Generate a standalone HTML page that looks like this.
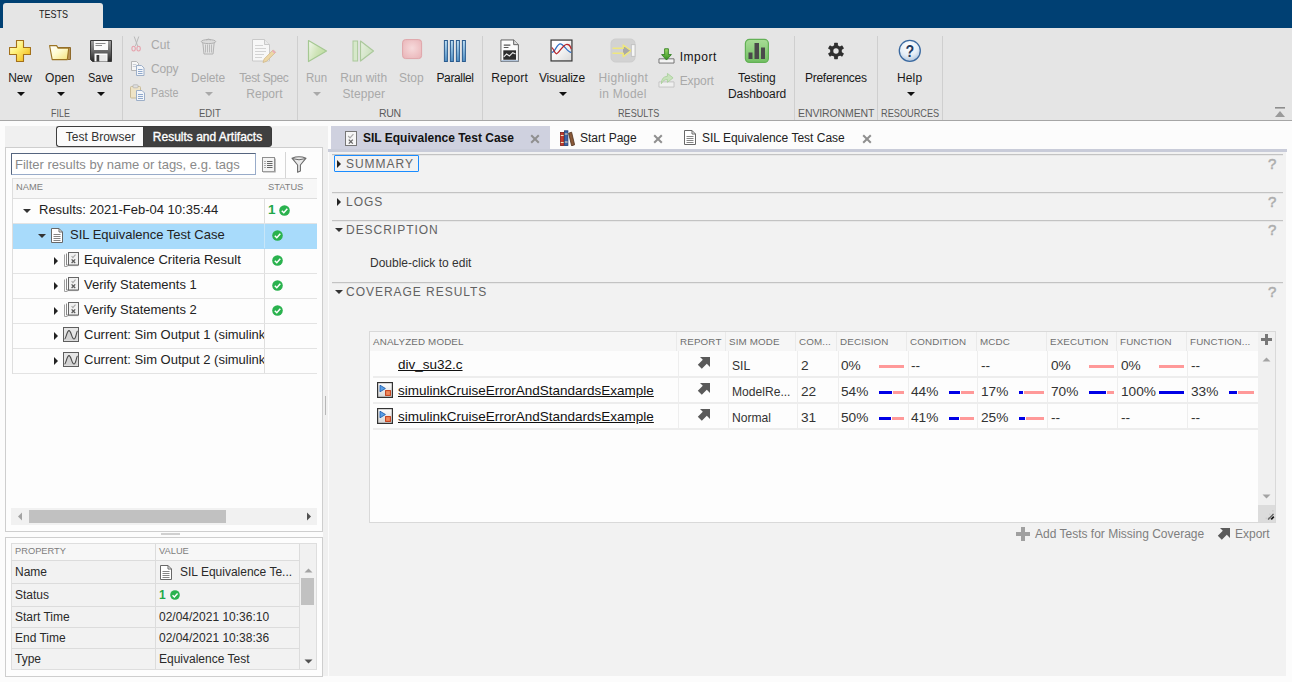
<!DOCTYPE html>
<html><head>
<meta charset="utf-8">
<title>Test Manager</title>
<style>
*{box-sizing:border-box;margin:0;padding:0}
html,body{width:1292px;height:682px;overflow:hidden;background:#fcfcfc;font-family:"Liberation Sans",sans-serif;font-size:12px;color:#000}
.abs{position:absolute}
#app{position:relative;width:1292px;height:682px;overflow:hidden;background:#fcfcfc}
/* title bar */
#titlebar{left:0;top:0;width:1292px;height:28px;background:#004073}
#tabtests{left:3px;top:3px;width:100px;height:26px;background:#e5e5e5;border-radius:3px 3px 0 0;text-align:center;font-size:12px;line-height:23px;color:#111}
/* toolstrip */
#toolstrip{left:0;top:28px;width:1292px;height:93px;background:#e5e5e5;border-bottom:1px solid #a6a6a6}
.tsep{position:absolute;top:8px;width:1px;height:84px;background:#cfcfcf}
.tl{position:absolute;font-size:12px;line-height:16px;text-align:center;white-space:nowrap;color:#1a1a1a;transform:translateX(-50%)}
.tl.dis{color:#a9a9a9}
.tsl{position:absolute;font-size:12px;line-height:16px;white-space:nowrap;color:#111}
.tsl.dis{color:#a9a9a9}
.tg{position:absolute;top:78px;font-size:10.5px;line-height:14px;color:#5c5c5c;transform:translateX(-50%);white-space:nowrap}
.arr{position:absolute;width:0;height:0;border-left:4px solid transparent;border-right:4px solid transparent;border-top:4px solid #111;transform:translateX(-50%)}
.arr.dis{border-top-color:#a9a9a9}
.ico{position:absolute}
</style>
</head>
<body>
<div id="app">
<!-- TITLEBAR -->
<div id="titlebar" class="abs"></div>
<div id="tabtests" class="abs"><span style="position:absolute;top:0;left:35.6px;font-size:11px;line-height:22px;white-space:nowrap;transform:scaleX(0.82);transform-origin:0 0;color:#1a1a1a">TESTS</span></div>
<!-- TOOLSTRIP -->
<div id="toolstrip" class="abs">
<svg width="0" height="0" style="position:absolute"><defs>
<linearGradient id="gGold" x1="0" y1="0" x2="1" y2="1"><stop offset="0" stop-color="#fffde8"></stop><stop offset="0.4" stop-color="#fff27a"></stop><stop offset="1" stop-color="#f0ae08"></stop></linearGradient>
<linearGradient id="gFold" x1="0" y1="0" x2="1" y2="1"><stop offset="0" stop-color="#ffffff"></stop><stop offset="0.45" stop-color="#fffbd0"></stop><stop offset="1" stop-color="#f4e07a"></stop></linearGradient>
<linearGradient id="gSave" x1="0" y1="0" x2="0" y2="1"><stop offset="0" stop-color="#a0a0a0"></stop><stop offset="0.5" stop-color="#6a6a6a"></stop><stop offset="1" stop-color="#262626"></stop></linearGradient>
<linearGradient id="gGreen" x1="0" y1="0.1" x2="1" y2="0.6"><stop offset="0" stop-color="#f0f6ea"></stop><stop offset="0.55" stop-color="#cfe4b8"></stop><stop offset="1" stop-color="#bcdc9e"></stop></linearGradient>
<linearGradient id="gGreen2" x1="0" y1="0.1" x2="1" y2="0.6"><stop offset="0" stop-color="#e6efdf"></stop><stop offset="1" stop-color="#c8dfba"></stop></linearGradient>
<linearGradient id="gBlue" x1="0" y1="0" x2="1" y2="0"><stop offset="0" stop-color="#4d88c4"></stop><stop offset="0.5" stop-color="#9cc3e6"></stop><stop offset="1" stop-color="#4d88c4"></stop></linearGradient>
<linearGradient id="gBlueV" x1="0" y1="0" x2="0" y2="1"><stop offset="0" stop-color="#bfe0f5"></stop><stop offset="1" stop-color="#4f8fc4"></stop></linearGradient>
<radialGradient id="gStop" cx="0.5" cy="0.45" r="0.7"><stop offset="0" stop-color="#f6dadb"></stop><stop offset="1" stop-color="#e9b3b7"></stop></radialGradient>
<linearGradient id="gDash" x1="0" y1="0" x2="0" y2="1"><stop offset="0" stop-color="#a8dc96"></stop><stop offset="1" stop-color="#72c062"></stop></linearGradient>
<radialGradient id="gHelp" cx="0.45" cy="0.3" r="0.8"><stop offset="0" stop-color="#ffffff"></stop><stop offset="0.55" stop-color="#e4edf6"></stop><stop offset="1" stop-color="#9db6d2"></stop></radialGradient>
<linearGradient id="gMdl" x1="0" y1="0" x2="0" y2="1"><stop offset="0" stop-color="#ffffff"></stop><stop offset="1" stop-color="#d6d6d6"></stop></linearGradient>
<linearGradient id="gImp" x1="0" y1="0" x2="0" y2="1"><stop offset="0" stop-color="#9fdc6a"></stop><stop offset="1" stop-color="#2f8f1d"></stop></linearGradient>
</defs></svg>
<!-- FILE -->
<svg class="ico" style="left:9px;top:12px" width="22" height="22" viewBox="0 0 22 22"><path d="M7.5 0.5h7v7h7v7h-7v7h-7v-7h-7v-7h7z" fill="url(#gGold)" stroke="#a3701a" stroke-width="1.1" stroke-linejoin="round"></path></svg>
<div class="tl" style="left: 8.22px; top: 42px; transform: none; letter-spacing: -0.128px; text-align: left;">New</div><div class="arr" style="left:21px;top:64px"></div>
<svg class="ico" style="left:49px;top:17px" width="23" height="17" viewBox="0 0 23 17"><path d="M8 2.5h13.5v12h-2.5z" fill="#b8925a" stroke="#8f6a2c" stroke-width="1"></path><path d="M0.6 0.6h7l1.5 2.5h10.6l-1.4 11.5H3.2z" fill="url(#gFold)" stroke="#9c7424" stroke-width="1.1" stroke-linejoin="round"></path></svg>
<div class="tl" style="left: 45.02px; top: 42px; transform: none; letter-spacing: 0.034px; text-align: left;">Open</div><div class="arr" style="left:61px;top:64px"></div>
<svg class="ico" style="left:90px;top:12px" width="22" height="22" viewBox="0 0 22 22"><path d="M0.5 0.5h21v21H2.5l-2-2z" fill="url(#gSave)" stroke="#3a3a3a" stroke-width="1"></path><rect x="4" y="1" width="14" height="9" fill="#fafafa"></rect><rect x="5.5" y="3" width="10" height="1" fill="#8a8a8a"></rect><rect x="5.5" y="5" width="6.5" height="1" fill="#8a8a8a"></rect><rect x="4.5" y="13.5" width="13" height="8" fill="#fdfdfd"></rect><rect x="6.5" y="15" width="3" height="6.5" fill="#3a3a3a"></rect><rect x="9.5" y="15" width="7" height="6" fill="#e8e8e8"></rect></svg>
<div class="tl" style="left: 87.52px; top: 42px; transform: scaleX(0.9123); letter-spacing: 0px; transform-origin: 0px 0px; text-align: left;">Save</div><div class="arr" style="left:100.5px;top:64px"></div>
<div class="tg" style="left: 51.48px; transform: scaleX(0.8536); letter-spacing: 0px; transform-origin: 0px 0px; text-align: left;">FILE</div>
<div class="tsep" style="left:122px"></div>
<!-- EDIT -->
<svg class="ico" style="left:131px;top:8px" width="11" height="16" viewBox="0 0 11 16"><path d="M3.2 0.5L6.6 10M7.8 0.5L4.4 10" stroke="#b9b9b9" stroke-width="1" fill="none"></path><ellipse cx="2.6" cy="12.6" rx="1.7" ry="2.4" fill="none" stroke="#e6a3ad" stroke-width="1.1"></ellipse><ellipse cx="7.6" cy="12.6" rx="1.7" ry="2.4" fill="none" stroke="#e6a3ad" stroke-width="1.1"></ellipse></svg>
<div class="tsl dis" style="left: 151.02px; top: 9px; transform: none; letter-spacing: 0.036px; text-align: left;">Cut</div>
<svg class="ico" style="left:131px;top:33px" width="14" height="15" viewBox="0 0 14 15"><path d="M0.5 0.5h5l2 2v7h-7z" fill="#f6f6f6" stroke="#b5b5b5"></path><path d="M1.8 3.5h3.5M1.8 5.5h3.5" stroke="#c9ced6" stroke-width="1"></path><path d="M5.5 4.5h5l2.5 2.5v7.5h-7.5z" fill="#f4f6f9" stroke="#9dafc8"></path><path d="M7 8.5h4.5M7 10.5h4.5M7 12.5h4.5" stroke="#8fa8cc" stroke-width="1"></path></svg>
<div class="tsl dis" style="left: 151.02px; top: 33px; transform: none; letter-spacing: -0.185px; text-align: left;">Copy</div>
<svg class="ico" style="left:130px;top:56px" width="15" height="17" viewBox="0 0 15 17"><rect x="0.5" y="2.5" width="10" height="11.5" rx="1" fill="#eee3c6" stroke="#c9bb97"></rect><rect x="3" y="0.8" width="5" height="3" rx="0.8" fill="#e0e0e0" stroke="#b5b5b5" stroke-width="0.8"></rect><path d="M6.5 6.5h5.5l2.5 2.5v7.5h-8z" fill="#f4f6f9" stroke="#9dafc8"></path><path d="M8 10.5h5M8 12.5h5M8 14.5h5" stroke="#8fa8cc" stroke-width="1"></path></svg>
<div class="tsl dis" style="left: 151.02px; top: 57px; transform: scaleX(0.8948); letter-spacing: 0px; transform-origin: 0px 0px; text-align: left;">Paste</div>
<svg class="ico" style="left:200px;top:10px" width="17" height="17" viewBox="0 0 17 17"><path d="M2.8 4.5h11.4l-1.2 11.5H4z" fill="#e4e4e4" stroke="#b2b2b2"></path><path d="M5.5 6.5v8M7.5 6.5v8M9.5 6.5v8M11.5 6.5v8" stroke="#b4b4b4" stroke-width="0.9"></path><ellipse cx="8.5" cy="3.6" rx="7.2" ry="2" fill="#dcdcdc" stroke="#b0b0b0"></ellipse><path d="M6 1.9q2.5-1.6 5 0" fill="none" stroke="#b0b0b0"></path></svg>
<div class="tl dis" style="left: 191.12px; top: 42px; transform: none; letter-spacing: -0.105px; text-align: left;">Delete</div><div class="arr dis" style="left:209px;top:64px"></div>
<svg class="ico" style="left:251px;top:10px" width="26" height="26" viewBox="0 0 26 26"><path d="M1.5 1.5h12l5 5v16.5h-17z" fill="#f7f7f7" stroke="#c9c9c9"></path><path d="M13.5 1.5v5h5" fill="#eaeaea" stroke="#c9c9c9"></path><path d="M4 7.5h8M4 10.5h11M4 13.5h11M4 16.5h9M4 19.5h7" stroke="#d3d3d3" stroke-width="1"></path><path d="M12 24.5l1.2-3.6 9-9 2.4 2.4-9 9z" fill="#edd7a6" stroke="#d2b98a" stroke-width="0.8"></path><path d="M21 13.1l1.2-1.2 2.4 2.4-1.2 1.2z" fill="#e9a8bd"></path></svg>
<div class="tl dis" style="left: 239.22px; top: 42px; transform: none; letter-spacing: -0.38px; text-align: left;">Test Spec</div><div class="tl dis" style="left: 246.22px; top: 58px; transform: none; letter-spacing: 0.046px; text-align: left;">Report</div>
<div class="tg" style="left: 199.28px; transform: scaleX(0.9088); letter-spacing: 0px; transform-origin: 0px 0px; text-align: left;">EDIT</div>
<div class="tsep" style="left:297px"></div>
<!-- RUN -->
<svg class="ico" style="left:307px;top:11px" width="22" height="24" viewBox="0 0 22 24"><path d="M1.5 1.5L19.5 12 1.5 22.5z" fill="url(#gGreen)" stroke="#a5c892" stroke-width="1.2" stroke-linejoin="round"></path></svg>
<div class="tl dis" style="left: 306.02px; top: 42px; transform: scaleX(0.9566); letter-spacing: 0px; transform-origin: 0px 0px; text-align: left;">Run</div><div class="arr dis" style="left:317px;top:64px"></div>
<svg class="ico" style="left:352px;top:11px" width="23" height="24" viewBox="0 0 23 24"><rect x="1" y="2" width="4.6" height="20" fill="#d6e8ca" stroke="#abc99c"></rect><path d="M8.5 2L21.5 12 8.5 22z" fill="url(#gGreen2)" stroke="#abc99c" stroke-width="1.2" stroke-linejoin="round"></path></svg>
<div class="tl dis" style="left: 340.22px; top: 42px; transform: none; letter-spacing: 0.025px; text-align: left;">Run with</div><div class="tl dis" style="left: 342.52px; top: 58px; transform: none; letter-spacing: 0.071px; text-align: left;">Stepper</div>
<svg class="ico" style="left:401px;top:10px" width="22" height="22" viewBox="0 0 22 22"><rect x="1.6" y="1.6" width="19" height="19" rx="3" fill="url(#gStop)" stroke="#dfa5a9"></rect></svg>
<div class="tl dis" style="left: 399.12px; top: 42px; transform: none; letter-spacing: -0.043px; text-align: left;">Stop</div>
<svg class="ico" style="left:443px;top:12px" width="24" height="22" viewBox="0 0 24 22"><g fill="url(#gBlueV)" stroke="#2c5c8f" stroke-width="1"><rect x="1.4" y="0.5" width="3" height="21"></rect><rect x="7.4" y="0.5" width="3" height="21"></rect><rect x="13.4" y="0.5" width="3" height="21"></rect><rect x="19.4" y="0.5" width="3" height="21"></rect></g></svg>
<div class="tl" style="left: 436.42px; top: 42px; transform: none; letter-spacing: -0.353px; text-align: left;">Parallel</div>
<div class="tg" style="left: 378.88px; transform: none; letter-spacing: -0.255px; text-align: left;">RUN</div>
<div class="tsep" style="left:482px"></div>
<!-- RESULTS -->
<svg class="ico" style="left:499.6px;top:10.6px" width="19.8" height="23.6" viewBox="0 0 21 25"><path d="M1 1h13.5l5 5v18H1z" fill="#fbfbfb" stroke="#5a5a5a"></path><path d="M14.5 1v5h5" fill="#dcdcdc" stroke="#5a5a5a"></path><path d="M4 6.5h7M4 9h5" stroke="#555" stroke-width="1.2"></path><rect x="3.5" y="12" width="13.5" height="10" fill="#2d2d2d"></rect><path d="M4 19l3-3 3 2 3.5-3.5 3 1.5" fill="none" stroke="#e8e8e8" stroke-width="1.2"></path><path d="M1.5 22.5h18v1.2h-18z" fill="#9fb6d2"></path></svg>
<div class="tl" style="left: 491.22px; top: 42px; transform: none; letter-spacing: 0.106px; text-align: left;">Report</div>
<svg class="ico" style="left:549.5px;top:10.5px" width="23" height="23" viewBox="0 0 24 24"><defs><linearGradient id="gVis" x1="0.3" y1="0.3" x2="1" y2="1"><stop offset="0" stop-color="#ffffff"></stop><stop offset="1" stop-color="#d9d9d9"></stop></linearGradient></defs><rect x="1.1" y="1.1" width="21.8" height="21.8" fill="url(#gVis)" stroke="#3c3c3c" stroke-width="1.3"></rect><path d="M1.8 14C5.5 14 7 5 10.7 5S18 14 22.2 14" fill="none" stroke="#2f6fc4" stroke-width="1.3"></path><path d="M1.8 9C3.4 9 4.6 15.4 6.8 15.4S13.4 5.6 17.6 5.6S21 8.5 22.2 10.5" fill="none" stroke="#b5262b" stroke-width="1.3"></path></svg>
<div class="tl" style="left: 538.92px; top: 42px; transform: none; letter-spacing: -0.207px; text-align: left;">Visualize</div><div class="arr" style="left:562.5px;top:64px"></div>
<svg class="ico" style="left:610px;top:10px" width="26" height="25" viewBox="0 0 26 25"><rect x="1" y="1" width="24" height="23" rx="4.5" fill="#d2d2d2" stroke="#cdcdcd"></rect><path d="M13 7.2L21 12.6 13 18.6z" fill="#a9a9a9"></path><path d="M2.5 10.2h10.7V7l8 5.6-8 6v-3.4H2.5" fill="none" stroke="#efe77e" stroke-width="1.5" stroke-linejoin="round"></path><rect x="21.3" y="6.7" width="3.7" height="11.6" fill="#f6f6f6" stroke="#bcbcbc" stroke-width="0.8"></rect></svg>
<div class="tl dis" style="left: 598.52px; top: 42px; transform: none; letter-spacing: 0.332px; text-align: left;">Highlight</div><div class="tl dis" style="left: 599.22px; top: 58px; transform: none; letter-spacing: 0.272px; text-align: left;">in Model</div>
<svg class="ico" style="left:657.5px;top:19.5px" width="17" height="16" viewBox="0 0 18 17"><path d="M1 11.5h16v4.5H1z" fill="#f4f4f4" stroke="#6d6d6d"></path><path d="M7 0.8h4v6.2h3.2L9 12.8 3.8 7H7z" fill="url(#gImp)" stroke="#2b7a1b" stroke-width="0.9" stroke-linejoin="round"></path></svg>
<div class="tsl" style="left: 679.72px; top: 21px; transform: none; letter-spacing: 0.529px; text-align: left;">Import</div>
<svg class="ico" style="left:657.5px;top:43.5px" width="17" height="16" viewBox="0 0 18 17"><path d="M1 10.5h16v5.5H1z" fill="#efefef" stroke="#c2c2c2"></path><path d="M3.5 12.5Q3.5 5 10 4.5V1.5L16 6.2 10 11V8Q5.5 8 3.5 12.5z" fill="#c8e2bc" stroke="#a9cf9a" stroke-width="0.9" stroke-linejoin="round"></path></svg>
<div class="tsl dis" style="left: 679.72px; top: 45px; transform: none; letter-spacing: -0.106px; text-align: left;">Export</div>
<svg class="ico" style="left:744px;top:10px" width="26" height="26" viewBox="0 0 26 26"><rect x="1.4" y="1.4" width="23" height="23" rx="4" fill="url(#gDash)" stroke="#63b156" stroke-width="1.2"></rect><rect x="4.5" y="14.5" width="4" height="6.5" fill="#4a4a4a"></rect><rect x="10.5" y="5" width="4.5" height="16" fill="#4a4a4a"></rect><rect x="17" y="9.5" width="4" height="11.5" fill="#4a4a4a"></rect></svg>
<div class="tl" style="left: 738.02px; top: 42px; transform: none; letter-spacing: -0.045px; text-align: left;">Testing</div><div class="tl" style="left: 728.02px; top: 58px; transform: none; letter-spacing: -0.057px; text-align: left;">Dashboard</div>
<div class="tg" style="left: 618.08px; transform: scaleX(0.8675); letter-spacing: 0px; transform-origin: 0px 0px; text-align: left;">RESULTS</div>
<div class="tsep" style="left:794px"></div>
<!-- ENV -->
<svg class="ico" style="left:827px;top:14px" width="18" height="18" viewBox="-9 -9 18 18"><g fill="#2f2f2f"><circle r="5.9"></circle><g id="tooth"><rect x="-1.9" y="-8.2" width="3.8" height="4" rx="0.6"></rect></g><use href="#tooth" transform="rotate(60)"></use><use href="#tooth" transform="rotate(120)"></use><use href="#tooth" transform="rotate(180)"></use><use href="#tooth" transform="rotate(240)"></use><use href="#tooth" transform="rotate(300)"></use></g><circle r="2.7" fill="#e5e5e5"></circle></svg>
<div class="tl" style="left: 805.02px; top: 42px; transform: none; letter-spacing: -0.274px; text-align: left;">Preferences</div>
<div class="tg" style="left: 798.08px; transform: none; letter-spacing: -0.125px; text-align: left;">ENVIRONMENT</div>
<div class="tsep" style="left:877px"></div>
<!-- RESOURCES -->
<svg class="ico" style="left:898px;top:11px" width="24" height="24" viewBox="0 0 24 24"><circle cx="11.8" cy="11.8" r="10.5" fill="url(#gHelp)" stroke="#3a69a0" stroke-width="1.3"></circle><text x="11.8" y="17.8" font-family="Liberation Sans" font-weight="bold" font-size="17" text-anchor="middle" fill="#1f3a5f" transform="translate(1.9 0) scale(0.84 1)">?</text></svg>
<div class="tl" style="left: 897.02px; top: 42px; transform: none; letter-spacing: 0.124px; text-align: left;">Help</div><div class="arr" style="left:910.5px;top:64px"></div>
<div class="tg" style="left: 881.18px; transform: scaleX(0.8756); letter-spacing: 0px; transform-origin: 0px 0px; text-align: left;">RESOURCES</div>
<div class="tsep" style="left:942px"></div>
<!-- collapse -->
<svg class="ico" style="left:1274px;top:78px" width="12" height="12" viewBox="0 0 12 12"><rect x="1" y="1" width="10" height="1.6" fill="#8d8d8d"></rect><path d="M1 11L6 5l5 6z" fill="#9a9a9a"></path></svg>

</div>
<style>
#lp-strip{left:5px;top:126px;width:323px;height:22px;background:#f0f0f0}
#lp-gutter{left:323px;top:126px;width:5px;height:550px;background:#f0f0f0}
#btnTB{left:56px;top:126px;width:88px;height:21px;background:#fbfbfb;border:1px solid #3f3f3f;border-right:none;border-radius:3px 0 0 3px;font-size:12px;line-height:20px;text-align:center;color:#333}
#btnRA{left:143px;top:126px;width:129px;height:21px;background:#404040;border:1px solid #3a3a3a;border-radius:0 3px 3px 0;font-size:12px;line-height:20px;text-align:center;color:#fff;-webkit-text-stroke:0.35px #fff}
#lp-top{left:5px;top:147px;width:318px;height:385px;background:#fdfdfd;border:1px solid #cecece}
#filter{left:11px;top:153px;width:245px;height:22px;background:#fff;border:1px solid;border-color:#55657f #98abc9 #98abc9 #55657f;font-size:13px;line-height:21px;color:#8a8a8a;padding-left:3px;white-space:nowrap;overflow:hidden}
#lp-vsep{left:285px;top:152px;width:1px;height:26px;background:#d5d5d5}
.th{position:absolute;font-size:9.3px;color:#7d7d7d;letter-spacing:0;line-height:12px;white-space:nowrap}
#tree{left:12px;top:178px;width:306px;height:196px;border-left:1px solid #dedede;border-right:1px solid transparent;overflow:hidden}
#tree .hd{position:absolute;left:0;top:0;width:304px;height:21px;background:#f7f7f7;border-top:1px solid #dedede;border-bottom:1px solid #dedede}
.tr{position:absolute;left:0;width:304px;height:25px;border-bottom:1px solid #e3e3e3;font-size:13px;line-height:24px;color:#222;white-space:nowrap}
.tr.sel{background:#a8dbfb;border-bottom-color:#a8dbfb}
.tr .nm{position:absolute;left:0;top:0;width:252px;height:24px;overflow:hidden;border-right:1px solid #dedede}
.tr .tx{position:absolute;top:-1px}
.colsep{position:absolute;left:251px;top:0;width:1px;height:196px;background:#dedede}
.tri-d{position:absolute;width:0;height:0;border-left:4px solid transparent;border-right:4px solid transparent;border-top:4.5px solid #333}
.tri-r{position:absolute;width:0;height:0;border-top:4px solid transparent;border-bottom:4px solid transparent;border-left:4.5px solid #222}
.chk{position:absolute;width:11px;height:11px}
.one{position:absolute;font-weight:bold;font-size:13.5px;color:#1fa84a;line-height:24px}
#hscroll{left:11px;top:508px;width:306px;height:17px;background:#f1f1f1}
#hthumb{left:29px;top:510px;width:197px;height:13px;background:#c1c1c1}
#splith{left:161px;top:533px;width:19px;height:2px;background:#d0d0d0}
#lp-bot{left:5px;top:537px;width:318px;height:140px;background:#fdfdfd;border:1px solid #cecece}
#ptab{left:11px;top:543px;width:306px;height:127px;border:1px solid #dedede;background:#f2f2f2;overflow:hidden}
.pr{position:absolute;left:0;width:287px;border-bottom:1px solid #dcdcdc;font-size:12px;color:#2a2a2a;white-space:nowrap}
.pr div{position:absolute;top:0;height:100%}
.pr .k{left:0;width:144px;border-right:1px solid #dcdcdc;padding-left:3px}
.pr .v{left:144px;width:143px;padding-left:3px}
#pscroll{position:absolute;left:287px;top:0;width:18px;height:127px;background:#f1f1f1;border-left:1px solid #dcdcdc}
</style>
<div id="lp-strip" class="abs"></div>
<div id="lp-gutter" class="abs"></div>
<div id="btnTB" class="abs">Test Browser</div>
<div id="btnRA" class="abs">Results and Artifacts</div>
<div id="lp-top" class="abs"></div>
<div id="filter" class="abs">Filter results by name or tags, e.g. tags</div>
<svg class="abs" style="left:262px;top:157px" width="14" height="16" viewBox="0 0 14 16"><rect x="0.5" y="0.5" width="12" height="14" fill="#f4f4f4" stroke="#8f8f8f"></rect><path d="M1 15.2h12.5V1.5" fill="none" stroke="#bdbdbd" stroke-width="1"></path><path d="M2.5 4.5h1M5 4.5h5.5M2.5 6.5h1M5 6.5h5.5M2.5 8.5h1M5 8.5h5.5M2.5 10.5h1M5 10.5h5.5" stroke="#666" stroke-width="1"></path></svg>
<div id="lp-vsep" class="abs"></div>
<svg class="abs" style="left:291px;top:156px" width="16" height="17" viewBox="0 0 16 17"><path d="M1 2.2Q8 -0.6 15 2.2L9.4 9v6l-2.8 1.2V9z" fill="#e9e9e9" stroke="#6a6a6a" stroke-width="1.1" stroke-linejoin="round"></path><path d="M1.5 2.6Q8 5 14.5 2.6" fill="none" stroke="#6a6a6a" stroke-width="1"></path></svg>
<div id="tree" class="abs">
  <div class="hd"></div>
  <div class="th" style="left:3px;top:3px">NAME</div>
  <div class="th" style="left:255px;top:3px">STATUS</div>
  <div class="tr" style="top:21px"><div class="nm"><i class="tri-d" style="left:10px;top:10px"></i><span class="tx" style="left:26px">Results: 2021-Feb-04 10:35:44</span></div><span class="one" style="left:255px;top:-1px">1</span><svg class="chk" style="left:266px;top:6px" viewBox="0 0 11 11"><circle cx="5.5" cy="5.5" r="5.3" fill="#2ab24e"></circle><path d="M2.8 5.7l2 2 3.5-3.9" fill="none" stroke="#fff" stroke-width="1.5"></path></svg></div>
  <div class="tr sel" style="top:46px"><div class="nm" style="border-right-color:#c8e6f8"><i class="tri-d" style="left:25px;top:10px"></i><svg style="position:absolute;left:38px;top:4px" width="12" height="15" viewBox="0 0 12 15"><path d="M0.5 0.5h7.5l3.5 3.5v10.5h-11z" fill="#fff" stroke="#686868"></path><path d="M8 0.5v3.5h3.5" fill="none" stroke="#686868"></path><path d="M2.5 6.5h7M2.5 8.5h7M2.5 10.5h7M2.5 12.5h7" stroke="#858585" stroke-width="1"></path></svg><span class="tx" style="left:57px">SIL Equivalence Test Case</span></div><svg class="chk" style="left:259px;top:6px" viewBox="0 0 11 11"><circle cx="5.5" cy="5.5" r="5.3" fill="#2ab24e"></circle><path d="M2.8 5.7l2 2 3.5-3.9" fill="none" stroke="#fff" stroke-width="1.5"></path></svg></div>
  <div class="tr" style="top:71px"><div class="nm"><i class="tri-r" style="left:41px;top:7.5px"></i><svg style="position:absolute;left:51px;top:3px" width="15" height="15" viewBox="0 0 15 15"><path d="M0.5 2.5v12h3" fill="none" stroke="#a2a2a2"></path><path d="M2.5 1.5v11.5h2.5" fill="none" stroke="#8a8a8a"></path><path d="M3.5 13.6h10.5" stroke="#9a9a9a" stroke-width="0.9"></path><rect x="4.5" y="0.5" width="10" height="12.5" fill="#f1f1f1" stroke="#666"></rect><path d="M7.6 4.2l1.3 1.4 2.6-3" fill="none" stroke="#a8a8a8" stroke-width="1.1"></path><path d="M7.6 7.4l3.6 3.6M11.2 7.4l-3.6 3.6" stroke="#5a5a5a" stroke-width="1.3"></path></svg><span class="tx" style="left:71px">Equivalence Criteria Result</span></div><svg class="chk" style="left:259px;top:6px" viewBox="0 0 11 11"><circle cx="5.5" cy="5.5" r="5.3" fill="#2ab24e"></circle><path d="M2.8 5.7l2 2 3.5-3.9" fill="none" stroke="#fff" stroke-width="1.5"></path></svg></div>
  <div class="tr" style="top:96px"><div class="nm"><i class="tri-r" style="left:41px;top:7.5px"></i><svg style="position:absolute;left:51px;top:3px" width="15" height="15" viewBox="0 0 15 15"><path d="M0.5 2.5v12h3" fill="none" stroke="#a2a2a2"></path><path d="M2.5 1.5v11.5h2.5" fill="none" stroke="#8a8a8a"></path><path d="M3.5 13.6h10.5" stroke="#9a9a9a" stroke-width="0.9"></path><rect x="4.5" y="0.5" width="10" height="12.5" fill="#f1f1f1" stroke="#666"></rect><path d="M7.6 4.2l1.3 1.4 2.6-3" fill="none" stroke="#a8a8a8" stroke-width="1.1"></path><path d="M7.6 7.4l3.6 3.6M11.2 7.4l-3.6 3.6" stroke="#5a5a5a" stroke-width="1.3"></path></svg><span class="tx" style="left:71px">Verify Statements 1</span></div><svg class="chk" style="left:259px;top:6px" viewBox="0 0 11 11"><circle cx="5.5" cy="5.5" r="5.3" fill="#2ab24e"></circle><path d="M2.8 5.7l2 2 3.5-3.9" fill="none" stroke="#fff" stroke-width="1.5"></path></svg></div>
  <div class="tr" style="top:121px"><div class="nm"><i class="tri-r" style="left:41px;top:7.5px"></i><svg style="position:absolute;left:51px;top:3px" width="15" height="15" viewBox="0 0 15 15"><path d="M0.5 2.5v12h3" fill="none" stroke="#a2a2a2"></path><path d="M2.5 1.5v11.5h2.5" fill="none" stroke="#8a8a8a"></path><path d="M3.5 13.6h10.5" stroke="#9a9a9a" stroke-width="0.9"></path><rect x="4.5" y="0.5" width="10" height="12.5" fill="#f1f1f1" stroke="#666"></rect><path d="M7.6 4.2l1.3 1.4 2.6-3" fill="none" stroke="#a8a8a8" stroke-width="1.1"></path><path d="M7.6 7.4l3.6 3.6M11.2 7.4l-3.6 3.6" stroke="#5a5a5a" stroke-width="1.3"></path></svg><span class="tx" style="left:71px">Verify Statements 2</span></div><svg class="chk" style="left:259px;top:6px" viewBox="0 0 11 11"><circle cx="5.5" cy="5.5" r="5.3" fill="#2ab24e"></circle><path d="M2.8 5.7l2 2 3.5-3.9" fill="none" stroke="#fff" stroke-width="1.5"></path></svg></div>
  <div class="tr" style="top:146px"><div class="nm"><i class="tri-r" style="left:41px;top:7.5px"></i><svg style="position:absolute;left:50px;top:3px" width="16" height="15" viewBox="0 0 16 15"><rect x="0.5" y="0.5" width="15" height="14" fill="#e6e6e6" stroke="#5e5e5e"></rect><path d="M1.5 12C3.2 12 3.8 3.6 6 3.6S8.8 12 11 12S13.2 4.5 14.6 4V13.5H1.5z" fill="#d4d4d4" stroke="none"></path><path d="M1.5 12C3.2 12 3.8 3.6 6 3.6S8.8 12 11 12S13.2 4.5 14.6 4" fill="none" stroke="#4a4a4a" stroke-width="1.1"></path></svg><span class="tx" style="left:71px">Current: Sim Output 1 (simulinkCruise</span></div></div>
  <div class="tr" style="top:171px"><div class="nm"><i class="tri-r" style="left:41px;top:7.5px"></i><svg style="position:absolute;left:50px;top:3px" width="16" height="15" viewBox="0 0 16 15"><rect x="0.5" y="0.5" width="15" height="14" fill="#e6e6e6" stroke="#5e5e5e"></rect><path d="M1.5 12C3.2 12 3.8 3.6 6 3.6S8.8 12 11 12S13.2 4.5 14.6 4V13.5H1.5z" fill="#d4d4d4" stroke="none"></path><path d="M1.5 12C3.2 12 3.8 3.6 6 3.6S8.8 12 11 12S13.2 4.5 14.6 4" fill="none" stroke="#4a4a4a" stroke-width="1.1"></path></svg><span class="tx" style="left:71px">Current: Sim Output 2 (simulinkCruise</span></div></div>
</div>
<div id="hscroll" class="abs"></div>
<div id="hthumb" class="abs"></div>
<svg class="abs" style="left:17px;top:512px" width="6" height="9" viewBox="0 0 6 9"><path d="M5 0.5L1 4.5l4 4z" fill="#a3a3a3"></path></svg>
<svg class="abs" style="left:306px;top:512px" width="6" height="9" viewBox="0 0 6 9"><path d="M1 0.5L5 4.5l-4 4z" fill="#505050"></path></svg>
<div id="splith" class="abs"></div>
<div class="abs" style="left:325px;top:396px;width:1px;height:19px;background:#b8b8b8"></div>
<div id="lp-bot" class="abs"></div>
<div id="ptab" class="abs">
  <div class="pr" style="top:0;height:17px;background:#f7f7f7"><div class="k" style="font-size:9.3px;color:#7d7d7d;line-height:15px">PROPERTY</div><div class="v" style="font-size:9.3px;color:#7d7d7d;line-height:15px">VALUE</div></div>
  <div class="pr" style="top:17px;height:23px;line-height:22px"><div class="k">Name</div><div class="v"><svg style="position:absolute;left:4px;top:4px" width="12" height="15" viewBox="0 0 12 15"><path d="M0.5 0.5h7.5l3.5 3.5v10.5h-11z" fill="#fff" stroke="#686868"></path><path d="M8 0.5v3.5h3.5" fill="none" stroke="#686868"></path><path d="M2.5 6.5h7M2.5 8.5h7M2.5 10.5h7M2.5 12.5h7" stroke="#858585" stroke-width="1"></path></svg><span style="position:absolute;left:24px">SIL Equivalence Te...</span></div></div>
  <div class="pr" style="top:40px;height:23px;line-height:22px"><div class="k">Status</div><div class="v"><span style="position:absolute;left:3px;font-weight:bold;color:#1fa84a">1</span><svg class="chk" style="left:14px;top:6px;width:10px;height:10px" viewBox="0 0 11 11"><circle cx="5.5" cy="5.5" r="5.3" fill="#2ab24e"></circle><path d="M2.8 5.7l2 2 3.5-3.9" fill="none" stroke="#fff" stroke-width="1.5"></path></svg></div></div>
  <div class="pr" style="top:63px;height:21px;line-height:20px"><div class="k">Start Time</div><div class="v">02/04/2021 10:36:10</div></div>
  <div class="pr" style="top:84px;height:21px;line-height:20px"><div class="k">End Time</div><div class="v">02/04/2021 10:38:36</div></div>
  <div class="pr" style="top:105px;height:22px;line-height:20px"><div class="k">Type</div><div class="v">Equivalence Test</div></div>
  <div id="pscroll"><svg style="position:absolute;left:4px;top:24px" width="9" height="5" viewBox="0 0 9 5"><path d="M0.5 4.5L4.5 0.5l4 4z" fill="#a3a3a3"></path></svg><div style="position:absolute;left:1px;top:34px;width:13px;height:27px;background:#c1c1c1"></div><svg style="position:absolute;left:4px;top:115px" width="9" height="5" viewBox="0 0 9 5"><path d="M0.5 0.5L4.5 4.5l4-4z" fill="#505050"></path></svg></div>
</div>

<style>
#rp-tabline{left:328px;top:149px;width:959px;height:3px;background:#c9ccd9}
#rp-body{left:329px;top:152px;width:957px;height:524px;background:#f2f2f2}
#rtab1{left:331px;top:126px;width:219px;height:23px;background:#cfd1df}
.rtt{position:absolute;font-size:12px;line-height:14px;white-space:nowrap;color:#222}
.xbtn{position:absolute;width:10px;height:10px}
.secline{position:absolute;left:332px;width:951px;height:1px;background:#c3c3c3;border-bottom:1px solid #e8e8e8;box-sizing:content-box}
.sect{position:absolute;font-size:12px;letter-spacing:0.97px;color:#626262;line-height:14px;white-space:nowrap}
.qm{position:absolute;left:1268px;font-size:15px;line-height:16px;color:#adadad;-webkit-text-stroke:0.5px #adadad}
#covbox{left:369px;top:331px;width:907px;height:192px;background:#fdfdfd;border:1px solid #d9d9d9}
#covhd{left:370px;top:332px;width:888px;height:18.5px;background:#f6f6f6}
.ch{position:absolute;top:336px;font-size:9.8px;line-height:12px;color:#6f6f6f;white-space:nowrap;letter-spacing:0.15px}
.cvh{position:absolute;top:332px;width:1px;height:19px;background:#eaeaea}
.cvs{position:absolute;top:351px;width:1.6px;height:78px;background:#eeeeee;margin-left:-0.5px}
.crl{position:absolute;left:373px;width:885px;height:2px;background:#ededed;margin-top:-1px}
.lnk{position:absolute;margin-top:1px;font-size:13.5px;line-height:16px;color:#111;text-decoration:underline;white-space:nowrap}
.cv{position:absolute;margin-top:1px;font-size:13.7px;line-height:16px;color:#333;white-space:nowrap}
.cs{position:absolute;font-size:12.1px;line-height:16px;color:#333;white-space:nowrap}
.bar{position:absolute;width:25px;height:3px;background:#f99}
.bar i{position:absolute;left:0;top:0;height:3px;background:#0000e6;border-right:1px solid #fff;box-sizing:content-box}
#covscroll{left:1258px;top:332px;width:17px;height:190px;background:#f0f0f0}
#covcorner{left:1258px;top:505px;width:17px;height:17px;background:#dcdcdc}
.act{position:absolute;top:527px;font-size:12px;line-height:14px;color:#7e7e7e;white-space:nowrap}
</style>
<div id="rp-body" class="abs"></div>
<div id="rtab1" class="abs"></div>
<div id="rp-tabline" class="abs"></div>
<!-- tab 1 -->
<svg class="abs" style="left:345px;top:131px" width="12" height="15" viewBox="0 0 12 15"><rect x="0.5" y="0.5" width="11" height="14" fill="#f6f6f6" stroke="#777"></rect><path d="M3.2 5l1.8 1.8 3.4-3.6" fill="none" stroke="#aaa" stroke-width="1.2"></path><path d="M3.8 8.6l4 4M7.8 8.6l-4 4" stroke="#666" stroke-width="1.3"></path></svg>
<div class="rtt" style="left:363px;top:131px;font-weight:bold;color:#111" id="t1">SIL Equivalence Test Case</div>
<svg class="xbtn" style="left:530px;top:134px" viewBox="0 0 10 10"><path d="M1.2 1.2l7.6 7.6M8.8 1.2L1.2 8.8" stroke="#8f8f8f" stroke-width="2"></path></svg>
<!-- tab 2 -->
<svg class="abs" style="left:560px;top:130px" width="15" height="16" viewBox="0 0 15 16"><rect x="0.5" y="2.5" width="3.4" height="13" fill="#c23b2e" stroke="#7a1f17" stroke-width="0.8"></rect><rect x="4.5" y="0.8" width="3.4" height="14.7" fill="#3b62a8" stroke="#1f3a6e" stroke-width="0.8"></rect><path d="M8.6 3.2l3-1 3 12.6-3 1z" fill="#8a5a3a" stroke="#4e2f1b" stroke-width="0.8"></path><path d="M0.8 5.5h2.8M4.8 4h2.8M4.8 12h2.8M0.8 12.5h2.8" stroke="#f4e6c0" stroke-width="1"></path></svg>
<div class="rtt" style="left:580px;top:131px" id="t2">Start Page</div>
<svg class="xbtn" style="left:653px;top:134px" viewBox="0 0 10 10"><path d="M1.2 1.2l7.6 7.6M8.8 1.2L1.2 8.8" stroke="#8f8f8f" stroke-width="2"></path></svg>
<!-- tab 3 -->
<svg class="abs" style="left:684px;top:130px" width="12" height="15" viewBox="0 0 12 15"><path d="M0.5 0.5h7.5l3.5 3.5v10.5h-11z" fill="#fff" stroke="#686868"></path><path d="M8 0.5v3.5h3.5" fill="none" stroke="#686868"></path><path d="M2.5 6.5h7M2.5 8.5h7M2.5 10.5h7M2.5 12.5h7" stroke="#858585" stroke-width="1"></path></svg>
<div class="rtt" style="left:702px;top:131px" id="t3">SIL Equivalence Test Case</div>
<svg class="xbtn" style="left:862px;top:134px" viewBox="0 0 10 10"><path d="M1.2 1.2l7.6 7.6M8.8 1.2L1.2 8.8" stroke="#8f8f8f" stroke-width="2"></path></svg>
<!-- sections -->
<div class="secline" style="top:154px"></div>
<div class="abs" style="left:334px;top:155px;width:85px;height:17px;border:1.5px solid #1a8cff;border-radius:1px"></div>
<i class="tri-r" style="left:337px;top:160px"></i><div class="sect" style="left:346px;top:157px">SUMMARY</div>
<div class="qm" style="top:156px">?</div>
<div class="secline" style="top:192px"></div>
<i class="tri-r" style="left:337px;top:198px"></i><div class="sect" style="left:346px;top:195px">LOGS</div>
<div class="qm" style="top:194px">?</div>
<div class="secline" style="top:220px"></div>
<i class="tri-d" style="left:335px;top:228px"></i><div class="sect" style="left:346px;top:223px">DESCRIPTION</div>
<div class="qm" style="top:222px">?</div>
<div class="abs" style="left:370px;top:256px;font-size:12px;line-height:14px;color:#333">Double-click to edit</div>
<div class="secline" style="top:282px"></div>
<i class="tri-d" style="left:335px;top:290px"></i><div class="sect" style="left:346px;top:285px">COVERAGE RESULTS</div>
<div class="qm" style="top:284px">?</div>
<!-- coverage table -->
<div id="covbox" class="abs"></div>
<div id="covhd" class="abs"></div>
<div class="ch" style="left:373px">ANALYZED MODEL</div>
<div class="ch" style="left:680px">REPORT</div>
<div class="ch" style="left:729px">SIM MODE</div>
<div class="ch" style="left:799px">COM...</div>
<div class="ch" style="left:840px">DECISION</div>
<div class="ch" style="left:910px">CONDITION</div>
<div class="ch" style="left:980px">MCDC</div>
<div class="ch" style="left:1050px">EXECUTION</div>
<div class="ch" style="left:1120px">FUNCTION</div>
<div class="ch" style="left:1190px">FUNCTION...</div>
<div class="cvh" style="left:676px"></div><div class="cvh" style="left:725px"></div><div class="cvh" style="left:795px"></div><div class="cvh" style="left:836px"></div><div class="cvh" style="left:906px"></div><div class="cvh" style="left:976px"></div><div class="cvh" style="left:1046px"></div><div class="cvh" style="left:1116px"></div><div class="cvh" style="left:1186px"></div><div class="cvs" style="left:678px"></div><div class="cvs" style="left:728px"></div><div class="cvs" style="left:797px"></div><div class="cvs" style="left:838px"></div><div class="cvs" style="left:908px"></div><div class="cvs" style="left:977px"></div><div class="cvs" style="left:1047px"></div><div class="cvs" style="left:1117px"></div><div class="cvs" style="left:1187px"></div>
<div class="crl" style="top:377px"></div><div class="crl" style="top:403px"></div><div class="crl" style="top:429px"></div>
<div id="covscroll" class="abs"></div><div id="covcorner" class="abs"></div>
<svg class="abs" style="left:1261px;top:334px" width="11" height="11" viewBox="0 0 11 11"><path d="M4 0h3v4h4v3H7v4H4V7H0V4h4z" fill="#777"></path></svg>
<svg class="abs" style="left:1262px;top:357px" width="9" height="5" viewBox="0 0 9 5"><path d="M0.5 4.5L4.5 0.5l4 4z" fill="#a3a3a3"></path></svg>
<svg class="abs" style="left:1262px;top:494px" width="9" height="5" viewBox="0 0 9 5"><path d="M0.5 0.5L4.5 4.5l4-4z" fill="#a3a3a3"></path></svg>
<svg class="abs" style="left:1264px;top:509px" width="11" height="12" viewBox="0 0 11 12"><g fill="#cfcfcf"><rect x="8" y="1" width="1.6" height="1.6"></rect><rect x="5" y="4.5" width="1.6" height="1.6"></rect><rect x="8" y="4.5" width="1.6" height="1.6"></rect><rect x="1.5" y="8.5" width="1.6" height="1.6"></rect></g><path d="M9.5 5L4 10.5" stroke="#555" stroke-width="1.1"></path><path d="M9.8 7.6L7.2 10.4" stroke="#111" stroke-width="1.6"></path><rect x="4.6" y="8.4" width="1.8" height="1.8" fill="#777"></rect></svg>
<!-- rows -->
<div class="lnk" style="left:398px;top:356px" id="l1">div_su32.c</div>
<div class="lnk" style="left:398px;top:382px" id="l2">simulinkCruiseErrorAndStandardsExample</div>
<div class="lnk" style="left:398px;top:408px" id="l3">simulinkCruiseErrorAndStandardsExample</div>
<svg class="abs mdl" style="left:377px;top:382px" width="16" height="16" viewBox="0 0 16 16"><rect x="0.6" y="0.6" width="14.8" height="14.8" fill="url(#gMdl)" stroke="#333" stroke-width="1.2"></rect><path d="M3 3.2l5.4 3.3L3 9.8z" fill="#5aa0e6" stroke="#1f5fb0" stroke-width="0.9"></path><rect x="8.6" y="8.6" width="4.8" height="4.8" fill="#f08a5c" stroke="#c23a14" stroke-width="1"></rect></svg>
<svg class="abs mdl" style="left:377px;top:408px" width="16" height="16" viewBox="0 0 16 16"><rect x="0.6" y="0.6" width="14.8" height="14.8" fill="url(#gMdl)" stroke="#333" stroke-width="1.2"></rect><path d="M3 3.2l5.4 3.3L3 9.8z" fill="#5aa0e6" stroke="#1f5fb0" stroke-width="0.9"></path><rect x="8.6" y="8.6" width="4.8" height="4.8" fill="#f08a5c" stroke="#c23a14" stroke-width="1"></rect></svg>
<svg class="abs" style="left:696.5px;top:357px" width="13" height="13" viewBox="0 0 13 13"><path d="M3 0h10v10l-3.2-3.2-5 5L0.8 7.8l5-5z" fill="#5a5a5a"></path></svg>
<svg class="abs" style="left:696.5px;top:383px" width="13" height="13" viewBox="0 0 13 13"><path d="M3 0h10v10l-3.2-3.2-5 5L0.8 7.8l5-5z" fill="#5a5a5a"></path></svg>
<svg class="abs" style="left:696.5px;top:409px" width="13" height="13" viewBox="0 0 13 13"><path d="M3 0h10v10l-3.2-3.2-5 5L0.8 7.8l5-5z" fill="#5a5a5a"></path></svg>
<div class="cs" style="left:732px;top:358px">SIL</div><div class="cs" style="left:732px;top:384px">ModelRe...</div><div class="cs" style="left:732px;top:410px">Normal</div>
<div class="cv" style="left:801px;top:357px">2</div><div class="cv" style="left:801px;top:383px">22</div><div class="cv" style="left:801px;top:409px">31</div>
<!-- row1 -->
<div class="cv" style="left:841px;top:357px">0%</div><div class="bar" style="left:879px;top:365px"></div>
<div class="cv" style="left:911px;top:357px">--</div>
<div class="cv" style="left:981px;top:357px">--</div>
<div class="cv" style="left:1051px;top:357px">0%</div><div class="bar" style="left:1089px;top:365px"></div>
<div class="cv" style="left:1121px;top:357px">0%</div><div class="bar" style="left:1159px;top:365px"></div>
<div class="cv" style="left:1191px;top:357px">--</div>
<!-- row2 -->
<div class="cv" style="left:841px;top:383px">54%</div><div class="bar" style="left:879px;top:391px"><i style="width:13px"></i></div>
<div class="cv" style="left:911px;top:383px">44%</div><div class="bar" style="left:949px;top:391px"><i style="width:11px"></i></div>
<div class="cv" style="left:981px;top:383px">17%</div><div class="bar" style="left:1019px;top:391px"><i style="width:4px"></i></div>
<div class="cv" style="left:1051px;top:383px">70%</div><div class="bar" style="left:1089px;top:391px"><i style="width:17px"></i></div>
<div class="cv" style="left:1121px;top:383px">100%</div><div class="bar" style="left:1159px;top:391px"><i style="width:25px;border:none"></i></div>
<div class="cv" style="left:1191px;top:383px">33%</div><div class="bar" style="left:1229px;top:391px"><i style="width:8px"></i></div>
<!-- row3 -->
<div class="cv" style="left:841px;top:409px">50%</div><div class="bar" style="left:879px;top:417px"><i style="width:12px"></i></div>
<div class="cv" style="left:911px;top:409px">41%</div><div class="bar" style="left:949px;top:417px"><i style="width:10px"></i></div>
<div class="cv" style="left:981px;top:409px">25%</div><div class="bar" style="left:1019px;top:417px"><i style="width:6px"></i></div>
<div class="cv" style="left:1051px;top:409px">--</div>
<div class="cv" style="left:1121px;top:409px">--</div>
<div class="cv" style="left:1191px;top:409px">--</div>
<!-- actions -->
<svg class="abs" style="left:1016px;top:527px" width="14" height="14" viewBox="0 0 14 14"><path d="M5 0h4v5h5v4H9v5H5V9H0V5h5z" fill="#a0a0a0"></path></svg>
<div class="act" style="left:1035px" id="a1">Add Tests for Missing Coverage</div>
<svg class="abs" style="left:1217px;top:528px" width="13" height="13" viewBox="0 0 13 13"><path d="M3 0h10v10l-3.2-3.2-5 5L0.8 7.8l5-5z" fill="#5a5a5a"></path></svg>
<div class="act" style="left:1235px" id="a2">Export</div>

</div>


</body></html>
